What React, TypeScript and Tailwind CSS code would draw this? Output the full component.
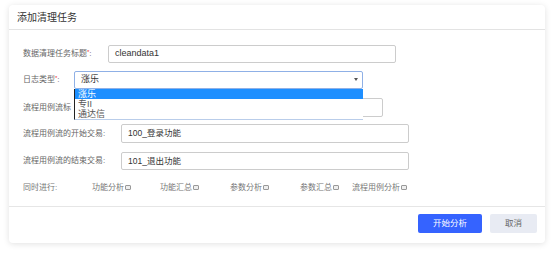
import React from "react";

const font = { fontFamily: '"Liberation Sans", "Noto Sans CJK SC", sans-serif' };

function Check({ label }: { label: string }) {
  return (
    <span className="flex items-center text-[8px] text-[#777] leading-[10px]">
      {label}
      <span className="ml-[1px] relative -top-[1px] inline-block w-[6px] h-[5px] border border-[#999] bg-[#eee] rounded-[1px]" />
    </span>
  );
}

export default function App() {
  return (
    <div className="w-[554px] h-[258px] bg-white pt-[5px] pl-[9px]" style={font}>
      <div className="w-[536px] h-[238px] bg-white rounded-[4px] shadow-[0_1px_6px_rgba(0,0,0,0.12)] flex flex-col">
        <div className="h-[25px] border-b border-[#e3e3e3] flex items-center pl-[8px] text-[10px] text-[#333]">
          添加清理任务
        </div>
        <div className="flex-1 pl-[14px] relative">
          {/* row 1 */}
          <div className="flex items-center mt-[15px] h-[18px]">
            <span className="w-[85px] text-[8px] text-[#666]">
              数据清理任务标题<span className="text-[#e33] text-[6px] align-top">*</span>:
            </span>
            <div className="w-[288px] h-[18px] border border-[#ccc] rounded-[2px] flex items-center pl-[6px] text-[9px] text-[#333]">
              cleandata1
            </div>
          </div>
          {/* row 2 */}
          <div className="flex items-center mt-[8px] h-[18px] relative">
            <span className="w-[51px] text-[8px] text-[#666]">
              日志类型<span className="text-[#e33] text-[6px] align-top">*</span>:
            </span>
            <div className="relative">
              <div className="w-[289px] h-[18px] border border-[#8fb0e6] rounded-[2px] flex items-center pl-[6px] text-[9px] text-[#333]">
                涨乐
                <span className="absolute right-[5px] top-[7px] w-0 h-0 border-l-[2px] border-r-[2px] border-t-[3px] border-l-transparent border-r-transparent border-t-[#555]" />
              </div>
              <div className="absolute left-0 top-[18px] w-[289px] h-[31px] bg-white border-l border-l-[#222] border-b border-b-[#b9cdea] z-10 flex flex-col text-[9px] leading-[10px]">
                <div className="h-[10px] bg-[#1e8fff] text-white pl-[3px]">涨乐</div>
                <div className="h-[10px] text-[#555] pl-[3px]">专II</div>
                <div className="h-[10px] text-[#555] pl-[3px]">通达信</div>
              </div>
            </div>
          </div>
          {/* row 3 */}
          <div className="flex items-center mt-[9px] h-[19px]">
            <span className="w-[51px] overflow-hidden whitespace-nowrap text-[8px] text-[#666]">流程用例流标</span>
            <div className="ml-[35px] w-[274px] h-[19px] border border-[#ccc] rounded-[2px]" />
          </div>
          {/* row 4 */}
          <div className="flex items-center mt-[7px] h-[19px]">
            <span className="w-[98px] text-[8px] text-[#666]">流程用例流的开始交易:</span>
            <div className="w-[288px] h-[19px] border border-[#ccc] rounded-[2px] flex items-center pl-[6px] text-[8.5px] text-[#333]">
              100_登录功能
            </div>
          </div>
          {/* row 5 */}
          <div className="flex items-center mt-[9px] h-[18px]">
            <span className="w-[98px] text-[8px] text-[#666]">流程用例流的结束交易:</span>
            <div className="w-[288px] h-[18px] border border-[#ccc] rounded-[2px] flex items-center pl-[6px] text-[8.5px] text-[#333]">
              101_退出功能
            </div>
          </div>
          {/* row 6 */}
          <div className="flex items-center mt-[10px] h-[16px] text-[8px] text-[#777]">
            <span className="w-[69px]">同时进行:</span>
            <span className="w-[68px]"><Check label="功能分析" /></span>
            <span className="w-[70px]"><Check label="功能汇总" /></span>
            <span className="w-[70px]"><Check label="参数分析" /></span>
            <span className="w-[52px]"><Check label="参数汇总" /></span>
            <span><Check label="流程用例分析" /></span>
          </div>
        </div>
        <div className="h-[37px] border-t border-[#e6e6e6] flex items-start justify-end pt-[7px] pr-[8px] gap-[8px]">
          <div className="w-[64px] h-[19px] bg-[#3563ff] rounded-[2px] flex items-center justify-center text-[8.5px] text-white">
            开始分析
          </div>
          <div className="w-[47px] h-[19px] bg-[#e8ebf3] rounded-[2px] flex items-center justify-center text-[8.5px] text-[#666]">
            取消
          </div>
        </div>
      </div>
    </div>
  );
}
